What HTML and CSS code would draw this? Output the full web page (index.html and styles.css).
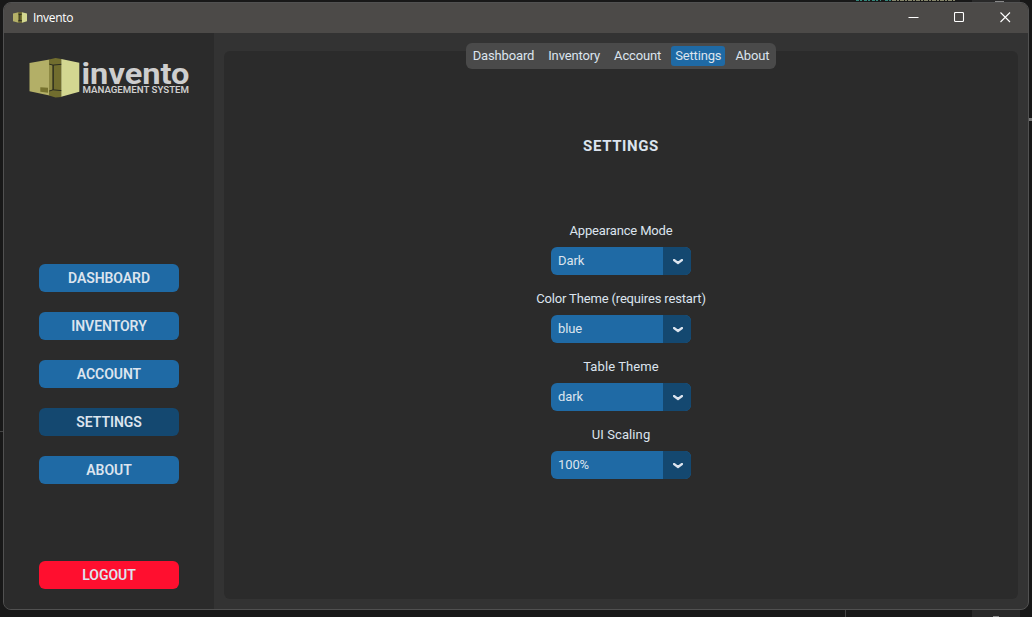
FILE: index.html
```html
<!DOCTYPE html>
<html lang="en">
<head>
<meta charset="utf-8">
<title>Invento</title>
<link rel="stylesheet" href="styles.css">
</head>
<body>
<svg class="backdrop" width="1032" height="617" viewBox="0 0 1032 617" aria-hidden="true">
  <path fill="#292929" d="M972 0h48v3h-48zM972 609h48v8h-48z"/>
  <path stroke="#34877b" stroke-dasharray="3 1 2 2" d="M856 .5h25M885 .5h6"/>
  <path stroke="#85856a" stroke-dasharray="4 1 2 1" d="M892 .5h64"/>
  <path stroke="#444" d="M0 431.5h4M845.5 610v7"/>
  <path stroke="#888" d="M995 1.5h9M993 616.5h6"/>
  <path stroke="#777" stroke-width="3" d="M1029 119.500h3"/>
</svg>
<div class="window">
  <header class="titlebar">
    <svg class="app-icon" width="14" height="11" viewBox="0 0 50 40" preserveAspectRatio="none"><path fill="#b5b168" d="M0 5 20 1v38L0 34z"/><path fill="#77732f" d="M19 1h14v38H19z"/><path fill="#d4d890" d="M32 1 50 5v29l-18 5z"/><path fill="#282923" d="M20 6h11v4h-5v20h6v4H19v-4h4V10h-3z"/></svg>
    <span class="app-name">Invento</span>
    <div class="controls">
      <svg width="11" height="11" viewBox="0 0 11 11"><path d="M.5 5.500h10"/></svg>
      <svg width="11" height="11" viewBox="0 0 11 11"><rect x=".5" y=".5" width="9" height="9" rx="1"/></svg>
      <svg width="11" height="11" viewBox="0 0 11 11"><path d="m.5.5 9.500 9.500m0-9.500L.5 10"/></svg>
    </div>
  </header>
  <div class="body">
    <aside class="sidebar">
      <svg class="logo" width="162" height="42" viewBox="0 0 162 42">
        <path fill="#b3af67" d="M.5 6 20.500 2.500v36L.5 34.300z"/>
        <path fill="#716d2e" d="M20 2.500 26.500 1l6 1v38l-6 .6-6.500-2z"/>
        <path fill="#d3d791" d="M32.300 2 50.300 5.800v28.900l-18 5z"/>
        <path fill="#8d8943" d="M20 8h3v25h-3z"/>
        <path fill="none" stroke="#2c2d20" d="m20.500 7.200 3.500.9 8.300-.8M20.500 34l3.500-1.200 8.300.8"/>
        <path fill="none" stroke="#2c2d20" stroke-width="1.300" d="M24.200 8v25"/>
        <path fill="#77732f" d="m11.300 30.200 7.700.5v5l-7.700-1z"/>
        <text class="logo-name" x="52.500" y="26.800" textLength="108" lengthAdjust="spacingAndGlyphs">invento</text>
        <text class="logo-tag" x="53.500" y="35.600" textLength="106.500" lengthAdjust="spacingAndGlyphs">MANAGEMENT SYSTEM</text>
      </svg>
      <nav class="menu">
        <a class="button">DASHBOARD</a>
        <a class="button">INVENTORY</a>
        <a class="button">ACCOUNT</a>
        <a class="button current">SETTINGS</a>
        <a class="button">ABOUT</a>
      </nav>
      <a class="button logout">LOGOUT</a>
    </aside>
    <main class="content">
      <nav class="tabs">
        <a class="tab">Dashboard</a><a class="tab">Inventory</a><a class="tab">Account</a><a class="tab active">Settings</a><a class="tab">About</a>
      </nav>
      <section class="panel">
        <h1 class="heading">SETTINGS</h1>
        <div class="field"><span class="label">Appearance Mode</span><div class="select"><span class="value">Dark</span><span class="arrow"><svg width="10" height="6" viewBox="0 0 10 6"><path d="m1 1 4 3 4-3"/></svg></span></div></div>
        <div class="field"><span class="label">Color Theme (requires restart)</span><div class="select"><span class="value">blue</span><span class="arrow"><svg width="10" height="6" viewBox="0 0 10 6"><path d="m1 1 4 3 4-3"/></svg></span></div></div>
        <div class="field"><span class="label loose">Table Theme</span><div class="select"><span class="value">dark</span><span class="arrow"><svg width="10" height="6" viewBox="0 0 10 6"><path d="m1 1 4 3 4-3"/></svg></span></div></div>
        <div class="field"><span class="label loose">UI Scaling</span><div class="select"><span class="value">100%</span><span class="arrow"><svg width="10" height="6" viewBox="0 0 10 6"><path d="m1 1 4 3 4-3"/></svg></span></div></div>
      </section>
    </main>
  </div>
</div>
</body>
</html>
```

FILE: styles.css
```css
* { box-sizing: border-box; }
body {
  margin: 0;
  width: 1032px;
  height: 617px;
  padding: 2px 3px 7px;
  overflow: hidden;
  background: #181818;
  color: #dce4ee;
  font: 13px/16px Roboto, sans-serif;
}
.backdrop { position: absolute; left: 0; top: 0; }
.window {
  position: relative;
  display: flex;
  flex-direction: column;
  width: 1026px;
  height: 608px;
  border: 1px solid #515151;
  border-radius: 8px;
  background: #333;
  overflow: hidden;
}
.titlebar {
  display: flex;
  align-items: center;
  flex: 0 0 30px;
  padding: 0 17px 0 9px;
  background: #4c4a48;
  color: #fff;
}
.app-icon { margin-top: -2px; }
.app-name { margin-left: 6px; font: 12px/16px "Open Sans", sans-serif; letter-spacing: -.3px; }
.controls { display: flex; gap: 35px; margin: -2px 0 0 auto; }
.controls svg { fill: none; stroke: #fff; stroke-width: 1.1; }
.body { display: flex; flex: 1; min-height: 0; }
.sidebar {
  display: flex;
  flex-direction: column;
  width: 210px;
  padding: 24px 35px 20px;
  background: #2b2b2b;
}
.logo { display: block; flex: none; margin-left: -10px; }
.logo-name { font: 700 29px Roboto, sans-serif; fill: #cecece; }
.logo-tag { font: 600 8.500px Roboto, sans-serif; fill: #cecece; }
.menu { display: flex; flex-direction: column; gap: 20px; margin-top: 165px; }
.button {
  flex: none;
  height: 28px;
  border-radius: 6px;
  background: #1f6aa5;
  text-align: center;
  font-size: 14px;
  font-weight: 600;
  line-height: 28px;
  letter-spacing: -.05px;
}
.current { background: #144870; }
.logout { margin-top: auto; background: #ff0f2f; }
.content {
  display: flex;
  flex-direction: column;
  align-items: center;
  flex: 1;
  padding: 10px 10px 10px;
}
.tabs {
  display: flex;
  z-index: 1;
  height: 26px;
  padding: 3px;
  border-radius: 6px;
  background: #4a4a4a;
}
.tab {
  padding: 0 4px;
  margin-right: 6px;
  border-radius: 3px;
  line-height: 20px;
  letter-spacing: -.15px;
}
.tab:last-child { margin-right: 0; }
.active { background: #1f6aa5; }
.panel {
  display: flex;
  flex-direction: column;
  align-items: center;
  width: 794px;
  flex: 1;
  margin-top: -18px;
  padding-top: 85px;
  border-radius: 6px;
  background: #2b2b2b;
}
.heading { margin: 0 0 67px; font-size: 15px; line-height: 20px; font-weight: 700; letter-spacing: .6px; }
.field {
  display: flex;
  flex-direction: column;
  align-items: center;
  height: 68px;
}
.label { line-height: 16px; margin-bottom: 8px; letter-spacing: -.16px; }
.loose { letter-spacing: .1px; }
.select { display: flex; width: 140px; height: 28px; border-radius: 6px; overflow: hidden; background: #1f6aa5; }
.value { flex: 1; padding-left: 7px; line-height: 28px; letter-spacing: -.1px; }
.arrow { display: flex; align-items: center; justify-content: center; width: 28px; background: #144870; }
.arrow svg { fill: none; stroke: #dce4ee; stroke-width: 2.2; stroke-linecap: round; stroke-linejoin: round; margin: 1px 0 0 1px; }
```
